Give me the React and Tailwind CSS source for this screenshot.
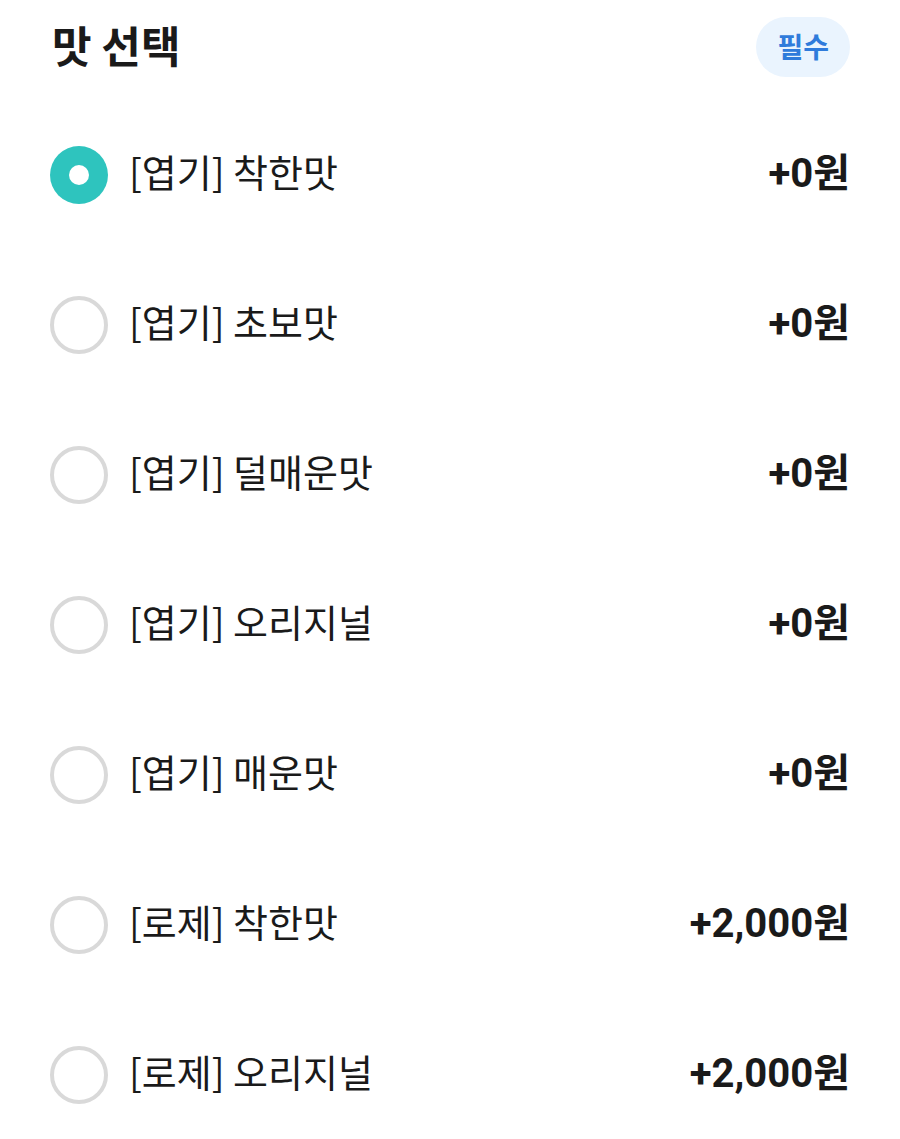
const options = [
  { label: "[엽기] 착한맛", price: "+0원" },
  { label: "[엽기] 초보맛", price: "+0원" },
  { label: "[엽기] 덜매운맛", price: "+0원" },
  { label: "[엽기] 오리지널", price: "+0원" },
  { label: "[엽기] 매운맛", price: "+0원" },
  { label: "[로제] 착한맛", price: "+2,000원" },
  { label: "[로제] 오리지널", price: "+2,000원" },
];

function Radio({ checked }) {
  if (checked) {
    return (
      <span className="flex h-[58px] w-[58px] shrink-0 items-center justify-center rounded-full bg-[#2ec4be]">
        <span className="h-[20px] w-[20px] rounded-full bg-white" />
      </span>
    );
  }
  return <span className="h-[58px] w-[58px] shrink-0 rounded-full border-[4px] border-[#d9d9d9]" />;
}

export default function App() {
  const selected = 0;
  return (
    <div className="min-h-[1139px] w-[900px] overflow-hidden bg-white pl-[50px] pr-[50px] pt-[17px] text-[#1a1a1a] [font-family:'Noto_Sans_CJK_KR',sans-serif]">
      <div className="flex h-[60px] items-center justify-between">
        <h2 className="pb-[6px] pl-[2px] text-[43px] font-bold leading-none">맛 선택</h2>
        <span className="flex h-[60px] items-center rounded-full bg-[#eaf4fe] px-[21px] pb-[3px] text-[28px] font-bold text-[#2f7bdb]">
          필수
        </span>
      </div>
      <ul className="mt-[23px]">
        {options.map((o, i) => (
          <li key={o.label} className="flex h-[150px] items-center">
            <Radio checked={i === selected} />
            <span className="ml-[21px] flex-1 pb-[8px] text-[38px] leading-none">{o.label}</span>
            <span className="pb-[2px] text-[40px] font-bold leading-none [font-family:Roboto,'Noto_Sans_CJK_KR',sans-serif]">
              {o.price}
            </span>
          </li>
        ))}
      </ul>
    </div>
  );
}
